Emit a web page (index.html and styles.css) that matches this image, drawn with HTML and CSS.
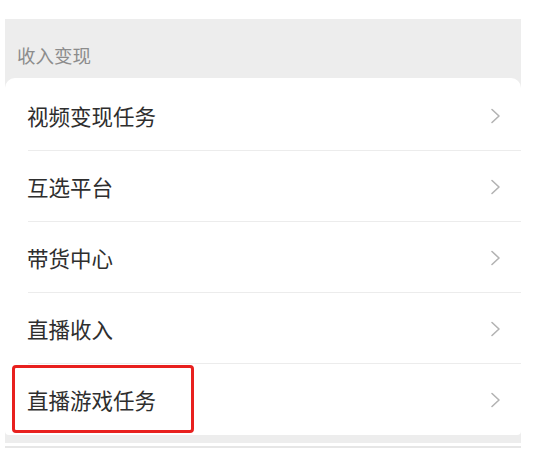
FILE: index.html
```html
<!DOCTYPE html>
<html lang="zh-CN">

<head>
    <meta charset="UTF-8">
    <meta name="viewport" content="width=device-width, initial-scale=1.0">
    <title>收入变现</title>
    <link rel="stylesheet" href="styles.css">
</head>

<body>
    <div class="panel">
        <div class="section-title">收入变现</div>
        <div class="card">
            <div class="row">
                <span class="label">视频变现任务</span>
                <svg class="arrow" width="11" height="16" viewBox="0 0 11 16"><polyline points="2,1.5 9,8 2,14.5" /></svg>
            </div>
            <div class="row">
                <span class="label">互选平台</span>
                <svg class="arrow" width="11" height="16" viewBox="0 0 11 16"><polyline points="2,1.5 9,8 2,14.5" /></svg>
            </div>
            <div class="row">
                <span class="label">带货中心</span>
                <svg class="arrow" width="11" height="16" viewBox="0 0 11 16"><polyline points="2,1.5 9,8 2,14.5" /></svg>
            </div>
            <div class="row">
                <span class="label">直播收入</span>
                <svg class="arrow" width="11" height="16" viewBox="0 0 11 16"><polyline points="2,1.5 9,8 2,14.5" /></svg>
            </div>
            <div class="row last">
                <span class="label">直播游戏任务</span>
                <svg class="arrow" width="11" height="16" viewBox="0 0 11 16"><polyline points="2,1.5 9,8 2,14.5" /></svg>
                <div class="highlight"></div>
            </div>
        </div>
    </div>
    <div class="bottom-line"></div>
</body>

</html>
```
FILE: styles.css
```css
body {
    font-family: "Noto Sans CJK SC", "Noto Sans", sans-serif;
    margin: 0;
    padding: 19px 0 0 5px;
    background-color: #fff;
    width: 516px;
}

.panel {
    background-color: #ededed;
    padding-bottom: 8px;
}

.section-title {
    height: 59px;
    padding: 27px 0 0 12px;
    box-sizing: border-box;
    font-size: 18.5px;
    line-height: 1;
    color: #8c8c8c;
}

.card {
    background: #fff;
    border-radius: 10px 10px 4px 4px;
    padding-top: 2px;
}

.row {
    position: relative;
    height: 71px;
    display: flex;
    align-items: center;
    justify-content: space-between;
    padding: 0 20px 0 22px;
}

.row::after {
    content: "";
    position: absolute;
    left: 23px;
    right: 0;
    bottom: 0;
    height: 1px;
    background: #ececec;
}

.row.last::after {
    display: none;
}

.label {
    font-size: 21.5px;
    color: #2e2e2e;
}

.arrow {
    fill: none;
    stroke: #b3b3b3;
    stroke-width: 1.6;
    stroke-linecap: round;
    stroke-linejoin: round;
}

.highlight {
    position: absolute;
    left: 7px;
    top: 1px;
    width: 176px;
    height: 62px;
    border: 3px solid #e8201e;
    border-radius: 4px;
}

.bottom-line {
    margin-top: 3px;
    height: 2px;
    background: #e6e6e6;
}
```
